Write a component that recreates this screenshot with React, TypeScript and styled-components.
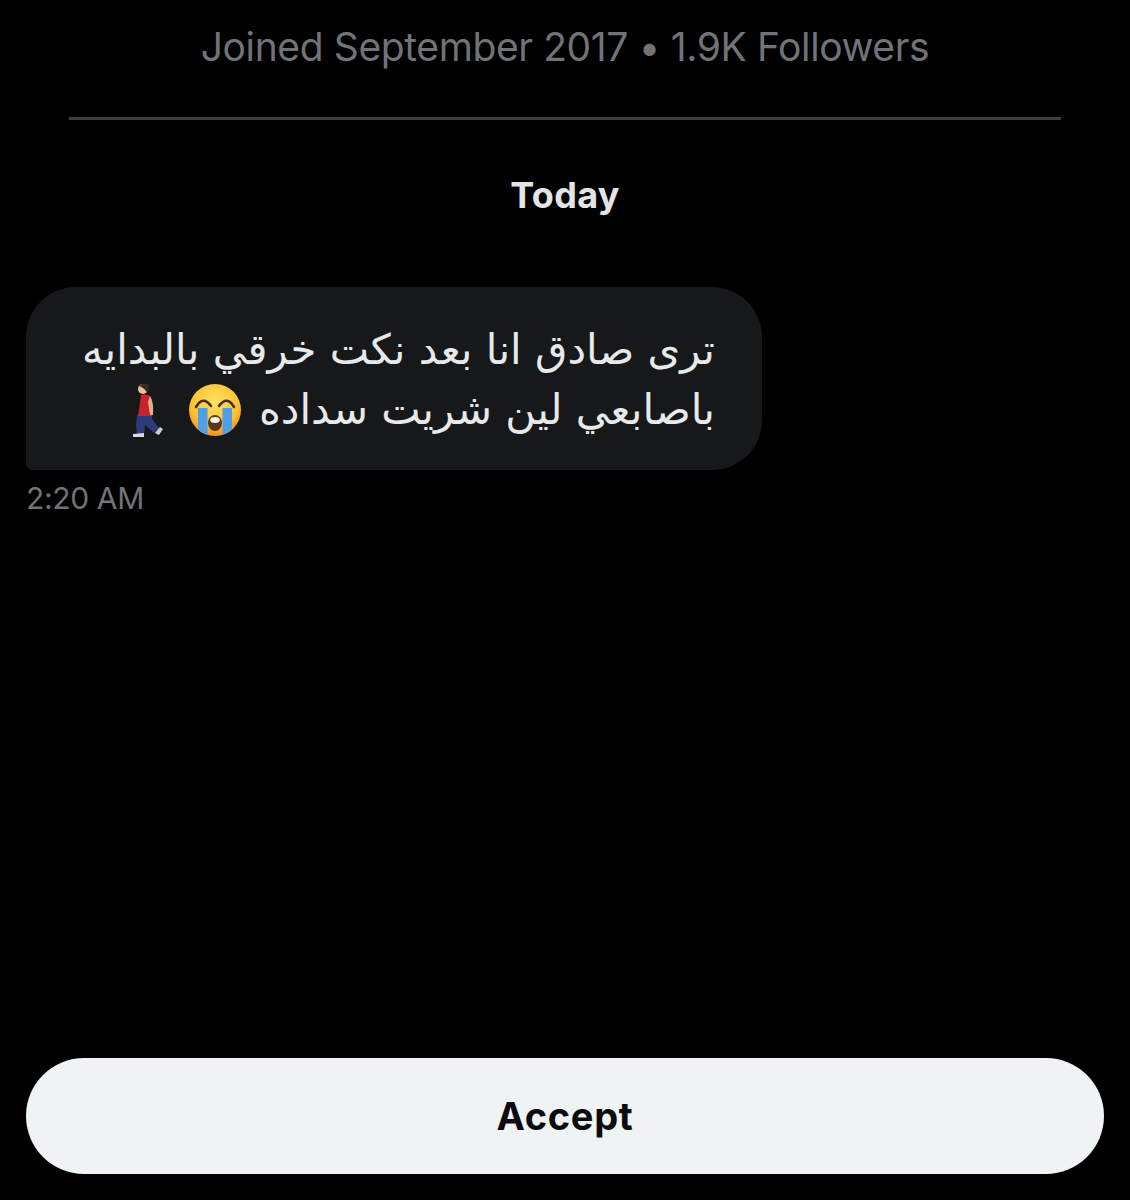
import styled, { createGlobalStyle } from "styled-components"

const GlobalStyle = createGlobalStyle`
    html, body {
        margin: 0;
        padding: 0;
        background: #000;
    }
`
const Screen = styled.div`
    width: 1130px;
    height: 1200px;
    background: #000;
    display: flex;
    flex-direction: column;
    overflow: hidden;
    font-family: Inter, "Liberation Sans", sans-serif;
`
const JoinedText = styled.div`
    margin-top: 23px;
    height: 48px;
    line-height: 48px;
    text-align: center;
    font-size: 39px;
    letter-spacing: -0.38px;
    color: #707377;
`
const Divider = styled.div`
    margin: 46px 69px 0;
    height: 3px;
    background: #3c3f43;
`
const DayLabel = styled.div`
    margin-top: 53px;
    height: 44px;
    line-height: 44px;
    text-align: center;
    font-size: 36px;
    font-weight: 700;
    letter-spacing: 0.3px;
    color: #e2e4e5;
`
const MessageColumn = styled.div`
    flex: 1;
    padding: 70px 26px 0;
    display: flex;
    flex-direction: column;
    align-items: flex-start;
`
const Bubble = styled.div`
    width: 736px;
    height: 183px;
    box-sizing: border-box;
    padding: 33px 47px 0 40px;
    background: #16181a;
    border-radius: 50px 50px 50px 6px;
    direction: rtl;
    font-family: "DejaVu Sans", sans-serif;
    font-size: 41.8px;
    line-height: 60px;
    color: #e7e9ea;
`
const MessageLine = styled.div`
    display: flex;
    align-items: center;
    white-space: nowrap;
    height: 60px;
`
const Emoji = styled.svg<{ $gap: number }>`
    flex: none;
    margin-right: ${(p) => p.$gap}px;
`
const TimeLabel = styled.div`
    margin-top: 10px;
    height: 36px;
    line-height: 36px;
    font-size: 30px;
    letter-spacing: -0.35px;
    color: #707377;
`
const Footer = styled.div`
    padding: 0 26px 26px;
`
const AcceptBtn = styled.button`
    display: block;
    width: 1078px;
    height: 116px;
    border: 0;
    border-radius: 58px;
    background: #eff3f4;
    color: #0a0c0e;
    font-family: Inter, "Liberation Sans", sans-serif;
    font-size: 38px;
    font-weight: 700;
    letter-spacing: 0.7px;
`

function CryingFace() {
    return (
        <Emoji $gap={17} width="54" height="54" viewBox="0 0 54 54">
            <defs>
                <radialGradient id="face" cx="50%" cy="35%" r="65%">
                    <stop offset="0%" stopColor="#ffe06a" />
                    <stop offset="70%" stopColor="#fcc22f" />
                    <stop offset="100%" stopColor="#f19020" />
                </radialGradient>
            </defs>
            <circle cx="27" cy="27" r="26" fill="url(#face)" />
            <path d="M10 25 H19.5 V52 Q14 50 10 46 Z" fill="#4f9ee8" />
            <path d="M34.5 25 H44 V46 Q40 50 34.5 52 Z" fill="#4f9ee8" />
            <path d="M8 24 Q15 12 23 23" fill="none" stroke="#4a2c10" strokeWidth="2.6" strokeLinecap="round" />
            <path d="M46 24 Q39 12 31 23" fill="none" stroke="#4a2c10" strokeWidth="2.6" strokeLinecap="round" />
            <ellipse cx="27" cy="40" rx="7" ry="8" fill="#5c3514" />
            <ellipse cx="27" cy="37" rx="4.8" ry="3" fill="#f4f2ea" />
        </Emoji>
    )
}

function WalkingPerson() {
    return (
        <Emoji $gap={23} width="36" height="56" viewBox="0 0 36 56">
            <path d="M8 33 L7 43 L8 53 L15 53 L16 43 L25 51 L31 47 L23 37 L23 33 Z" fill="#2f3a78" />
            <path d="M12 13 Q18 11 22 15 L23 34 L9 34 Q11 22 12 13 Z" fill="#c8232c" />
            <path d="M21 14 Q25 20 24 33 L21 33 L19 20 Z" fill="#e2ad8a" />
            <circle cx="14" cy="7" r="5" fill="#eebd9a" />
            <path d="M10 4 Q14 0 20 3 Q20 8 18 11 Q16 6 10 4 Z" fill="#3a2a22" />
            <path d="M4 52 L15 51 L15 55 L4 55 Z" fill="#d9d9d9" />
            <path d="M26 51 L31 45 L34 47 L30 53 Z" fill="#cfcfcf" />
        </Emoji>
    )
}

export default function App() {
    return (
        <>
            <GlobalStyle />
            <Screen>
                <JoinedText>Joined September 2017 • 1.9K Followers</JoinedText>
                <Divider />
                <DayLabel>Today</DayLabel>
                <MessageColumn>
                    <Bubble>
                        <MessageLine>ترى صادق انا بعد نكت خرقي بالبدايه</MessageLine>
                        <MessageLine>
                            باصابعي لين شريت سداده
                            <CryingFace />
                            <WalkingPerson />
                        </MessageLine>
                    </Bubble>
                    <TimeLabel>2:20 AM</TimeLabel>
                </MessageColumn>
                <Footer>
                    <AcceptBtn>Accept</AcceptBtn>
                </Footer>
            </Screen>
        </>
    )
}
